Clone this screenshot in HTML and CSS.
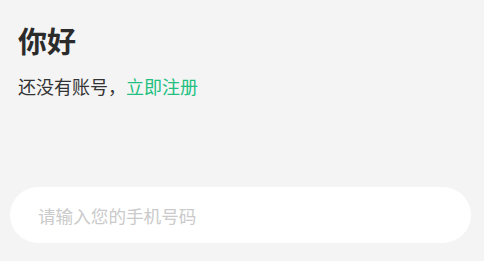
FILE: index.html
```html
<!DOCTYPE html>
<html lang="zh">
<head>
<meta charset="utf-8">
<link rel="stylesheet" href="styles.css">
</head>
<body>
<div class="page">
  <div class="head">
    <h1 class="title">你好</h1>
    <p class="sub">还没有账号，<a class="link" href="#">立即注册</a></p>
  </div>
  <div class="field">
    <input class="phone" type="text" placeholder="请输入您的手机号码">
  </div>
</div>
</body>
</html>
```
FILE: styles.css
```css
* { box-sizing: border-box; }
html, body {
  margin: 0;
  padding: 0;
  background: #f4f4f4;
  font-family: "Noto Sans CJK SC", "Noto Sans", sans-serif;
}
.page {
  width: 484px;
  height: 261px;
  display: flex;
  flex-direction: column;
}
.head {
  padding: 24px 0 0 18px;
}
.title {
  margin: 0;
  font-size: 29px;
  line-height: 32px;
  font-weight: 700;
  color: #2b2b2b;
}
.sub {
  margin: 19px 0 0 0;
  font-size: 18px;
  line-height: 22px;
  color: #333;
}
.link {
  color: #21bf80;
  text-decoration: none;
}
.field {
  margin: 90px 0 0 10px;
  width: 461px;
  height: 56px;
  background: #fff;
  border-radius: 28px;
  display: flex;
  align-items: center;
  padding-left: 28px;
}
.phone {
  border: none;
  outline: none;
  background: transparent;
  font-family: "Noto Sans CJK SC", "Noto Sans", sans-serif;
  font-size: 17.6px;
  color: #333;
  width: 100%;
  padding: 0;
}
.phone::placeholder {
  color: #cacaca;
}
```
